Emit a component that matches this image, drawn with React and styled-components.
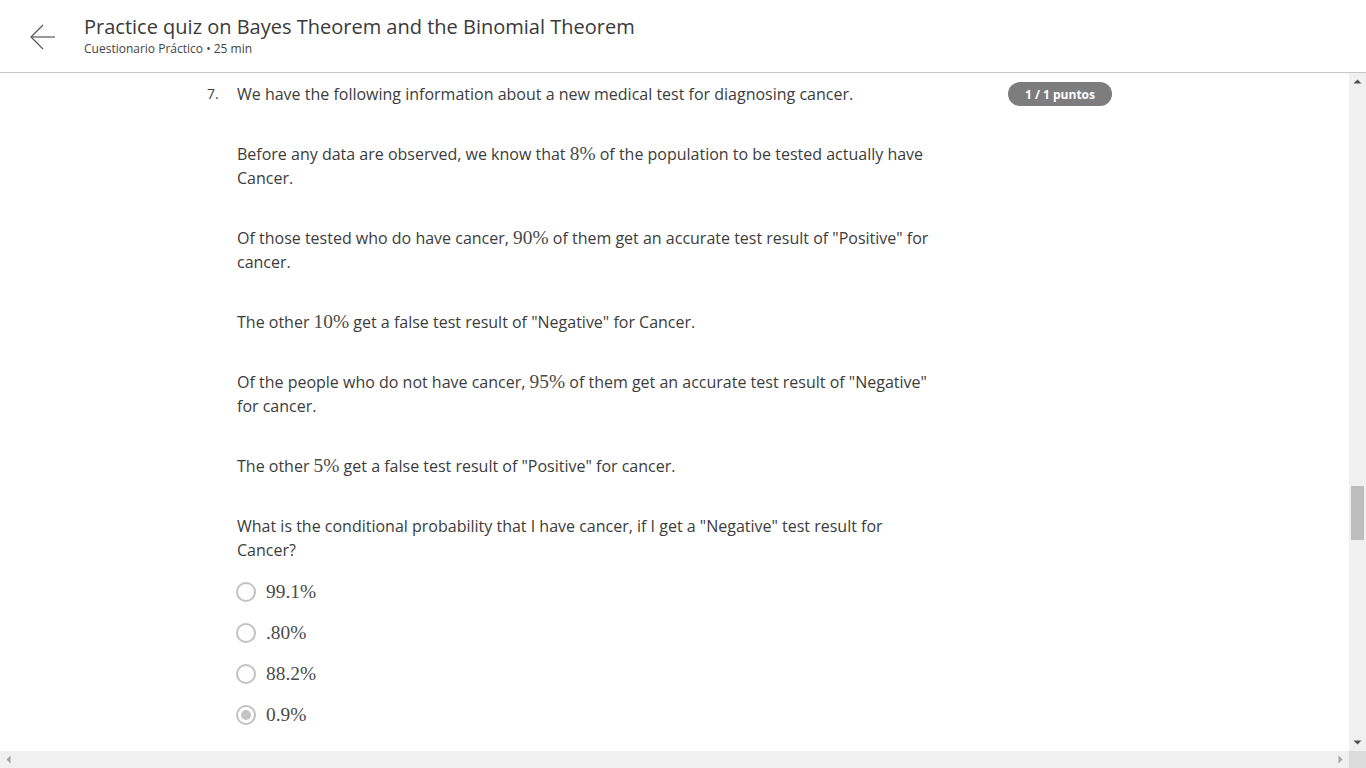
import React from "react";
import styled, { createGlobalStyle } from "styled-components";

const Global = createGlobalStyle`
  html, body { margin: 0; padding: 0; overflow: hidden; background: #fff; }
  body { font-family: "Open Sans", "Liberation Sans", sans-serif; color: #3c3c3c; }
  * { box-sizing: border-box; }
`;

const Page = styled.div`
  width: 100vw;
  height: 100vh;
  display: flex;
  flex-direction: column;
`;

const Header = styled.header`
  height: 73px;
  flex: none;
  display: flex;
  align-items: center;
  border-bottom: 1px solid #c6c6c6;
  padding-left: 29px;
`;

const BackButton = styled.button`
  width: 27px;
  height: 26px;
  padding: 0;
  border: none;
  background: none;
  display: flex;
  align-items: center;
  justify-content: center;
  margin-right: 28px;
  margin-top: 1px;
  cursor: pointer;
`;

const TitleBlock = styled.div`
  display: flex;
  flex-direction: column;
  margin-top: -2px;
`;

const Title = styled.h1`
  margin: 0;
  font-size: 20px;
  line-height: 26px;
  font-weight: 400;
  color: #3a3a3a;
`;

const Subtitle = styled.div`
  font-size: 12px;
  line-height: 16px;
  color: #444;
  margin-top: 1px;
`;

const Middle = styled.div`
  flex: 1;
  display: flex;
  min-height: 0;
`;

const Content = styled.main`
  flex: 1;
  overflow: hidden;
  padding: 9px 0 0 207px;
`;

const QuestionRow = styled.div`
  width: 905px;
  display: flex;
  align-items: flex-start;
`;

const Number = styled.div`
  width: 30px;
  flex: none;
  font-size: 14px;
  line-height: 24px;
  color: #444;
`;

const Body = styled.div`
  width: 700px;
  display: flex;
  flex-direction: column;
  gap: 36px;
`;

const Para = styled.p`
  margin: 0;
  font-size: 16px;
  line-height: 24px;
  color: #3c3c3c;
`;

const M = styled.span`
  font-family: "Liberation Serif", "Times New Roman", serif;
  font-size: 19.4px;
  line-height: 0;
  color: #4a4a4a;
`;

const Badge = styled.div`
  margin-left: auto;
  height: 24px;
  padding: 0 17px;
  border-radius: 12px;
  background: #7d7d7d;
  color: #fff;
  font-size: 12px;
  font-weight: 700;
  display: flex;
  align-items: center;
  white-space: nowrap;
`;

const QuestionBlock = styled.div`
  display: flex;
  flex-direction: column;
`;

const Options = styled.div`
  display: flex;
  flex-direction: column;
  margin-top: 9px;
`;

const Option = styled.label`
  height: 41px;
  display: flex;
  align-items: center;
  gap: 10px;
  margin-left: -1px;
`;

const Radio = styled.span`
  width: 20px;
  height: 20px;
  border-radius: 50%;
  border: 2px solid #c2c2c2;
  display: flex;
  align-items: center;
  justify-content: center;
  &::after {
    content: "";
    width: 10px;
    height: 10px;
    border-radius: 50%;
    background: ${(p) => (p.$checked ? "#c4c4c4" : "transparent")};
  }
`;

const OptionText = styled.span`
  font-family: "Liberation Serif", "Times New Roman", serif;
  font-size: 19.4px;
  color: #4a4a4a;
`;

const VScroll = styled.div`
  width: 17px;
  flex: none;
  background: #f0f0f0;
  display: flex;
  flex-direction: column;
`;

const ScrollBtn = styled.div`
  width: 17px;
  height: 17px;
  flex: none;
  display: flex;
  align-items: center;
  justify-content: center;
`;

const Track = styled.div`
  flex: 1;
  padding: 0 2px;
`;

const Thumb = styled.div`
  height: 54px;
  background: #bdbdbd;
`;

const Bottom = styled.div`
  height: 17px;
  flex: none;
  display: flex;
`;

const HScroll = styled.div`
  flex: 1;
  background: #f0f0f0;
  display: flex;
  justify-content: space-between;
`;

const Corner = styled.div`
  width: 17px;
  background: #dcdcdc;
`;

const Tri = ({ dir, color }) => {
  const pts = {
    up: "0.5,4.5 4.5,0.5 8.5,4.5",
    down: "0.5,0.5 8.5,0.5 4.5,4.5",
    left: "4.5,0.5 4.5,8.5 0.5,4.5",
    right: "0.5,0.5 0.5,8.5 4.5,4.5",
  }[dir];
  const horiz = dir === "left" || dir === "right";
  return (
    <svg width={horiz ? 5 : 9} height={horiz ? 9 : 5} viewBox={horiz ? "0 0 5 9" : "0 0 9 5"}>
      <polygon points={pts} fill={color} />
    </svg>
  );
};

const options = [
  { text: "99.1%", checked: false },
  { text: ".80%", checked: false },
  { text: "88.2%", checked: false },
  { text: "0.9%", checked: true },
];

export default function App() {
  return (
    <Page>
      <Global />
      <Header>
        <BackButton aria-label="Back">
          <svg width="26" height="26" viewBox="0 0 26 26" fill="none" stroke="#555" strokeWidth="1.2">
            <path d="M1 13 H25" />
            <path d="M13 1 L1 13 L13 25" />
          </svg>
        </BackButton>
        <TitleBlock>
          <Title>Practice quiz on Bayes Theorem and the Binomial Theorem</Title>
          <Subtitle>Cuestionario Práctico • 25 min</Subtitle>
        </TitleBlock>
      </Header>
      <Middle>
        <Content>
          <QuestionRow>
            <Number>7.</Number>
            <QuestionBlock>
              <Body>
                <Para>We have the following information about a new medical test for diagnosing cancer.</Para>
                <Para>
                  Before any data are observed, we know that <M>8%</M> of the population to be tested actually have Cancer.
                </Para>
                <Para>
                  Of those tested who do have cancer, <M>90%</M> of them get an accurate test result of "Positive" for cancer.
                </Para>
                <Para>
                  The other <M>10%</M> get a false test result of "Negative" for Cancer.
                </Para>
                <Para>
                  Of the people who do not have cancer, <M>95%</M> of them get an accurate test result of "Negative" for cancer.
                </Para>
                <Para>
                  The other <M>5%</M> get a false test result of "Positive" for cancer.
                </Para>
                <Para>
                  What is the conditional probability that I have cancer, if I get a "Negative" test result for Cancer?
                </Para>
              </Body>
              <Options>
                {options.map((o) => (
                  <Option key={o.text}>
                    <Radio $checked={o.checked} />
                    <OptionText>{o.text}</OptionText>
                  </Option>
                ))}
              </Options>
            </QuestionBlock>
            <Badge>1 / 1 puntos</Badge>
          </QuestionRow>
        </Content>
        <VScroll>
          <ScrollBtn><Tri dir="up" color="#505050" /></ScrollBtn>
          <Track>
            <Thumb style={{ marginTop: 396 }} />
          </Track>
          <ScrollBtn><Tri dir="down" color="#505050" /></ScrollBtn>
        </VScroll>
      </Middle>
      <Bottom>
        <HScroll>
          <ScrollBtn><Tri dir="left" color="#a3a3a3" /></ScrollBtn>
          <ScrollBtn><Tri dir="right" color="#a3a3a3" /></ScrollBtn>
        </HScroll>
        <Corner />
      </Bottom>
    </Page>
  );
}
